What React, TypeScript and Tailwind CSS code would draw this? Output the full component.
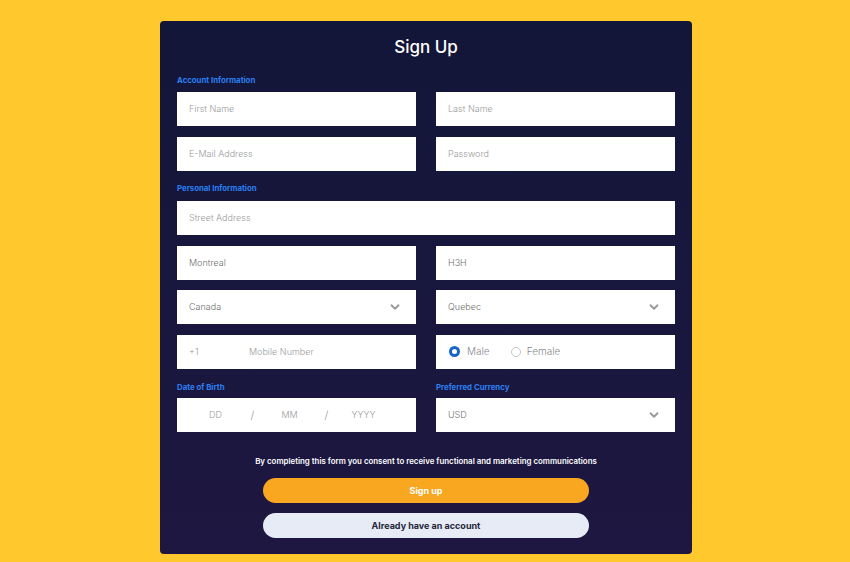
import { ChevronDown } from "lucide-react";

const FONT = { fontFamily: "Inter, 'Noto Sans', sans-serif" };

function Field({ children, className = "" }: { children: React.ReactNode; className?: string }) {
  return (
    <div className={"flex h-[34px] items-center bg-white pl-3 text-[9px] font-light " + className}>
      {children}
    </div>
  );
}

function SelectField({ value }: { value: string }) {
  return (
    <Field className="justify-between pr-[14px] text-[#6f6f6f]">
      <span>{value}</span>
      <ChevronDown className="h-[14px] w-[14px] text-[#9a9a9a]" strokeWidth={3.2} />
    </Field>
  );
}

function Label({ children }: { children: React.ReactNode }) {
  return <div className="text-[7.8px] font-bold leading-[10px] text-[#2a7ff0]">{children}</div>;
}

export default function App() {
  return (
    <div className="flex min-h-screen justify-center bg-[#FFC82C] pl-[2px] pt-[21px]" style={FONT}>
      <div className="h-[533px] w-[532px] rounded-[4px] bg-gradient-to-b from-[#121639] to-[#1e1741] px-[17px] pt-[15px]">
        <h1 className="text-center text-[17px] font-medium leading-[22px] text-white">Sign Up</h1>

        {/* account */}
        <div className="mt-[17px] mb-[7px]">
          <Label>Account Information</Label>
        </div>
        <div className="grid grid-cols-2 gap-x-5 gap-y-[11px] text-[#9a9a9a]">
          <Field>First Name</Field>
          <Field>Last Name</Field>
          <Field>E-Mail Address</Field>
          <Field>Password</Field>
        </div>

        {/* personal */}
        <div className="mt-[12px] mb-[8px]">
          <Label>Personal Information</Label>
        </div>
        <div className="grid grid-cols-2 gap-x-5 gap-y-[10.5px]">
          <Field className="col-span-2 text-[#9a9a9a]">Street Address</Field>
          <Field className="text-[#6f6f6f]">Montreal</Field>
          <Field className="text-[#6f6f6f]">H3H</Field>
          <SelectField value="Canada" />
          <SelectField value="Quebec" />
          <Field className="text-[#9a9a9a]">
            <span className="w-[60px]">+1</span>
            <span>Mobile Number</span>
          </Field>
          <Field className="pl-[13px] text-[10px] text-[#8a8a8a]">
            <span className="h-[11px] w-[11px] rounded-full border-[3.5px] border-[#1764cc] bg-white" />
            <span className="ml-[7px]">Male</span>
            <span className="ml-[21px] h-[10px] w-[10px] rounded-full border border-[#c4c4c4]" />
            <span className="ml-[6px]">Female</span>
          </Field>
        </div>

        {/* birth + currency */}
        <div className="mt-[13.5px] grid grid-cols-2 gap-x-5">
          <div>
            <div className="mb-[6px]">
              <Label>Date of Birth</Label>
            </div>
            <Field className="pl-[20px] text-[#9a9a9a]">
              <span className="w-[37px] text-center">DD</span>
              <span className="w-[37px] text-center text-[11px]">/</span>
              <span className="w-[37px] text-center">MM</span>
              <span className="w-[37px] text-center text-[11px]">/</span>
              <span className="w-[37px] text-center">YYYY</span>
            </Field>
          </div>
          <div>
            <div className="mb-[6px]">
              <Label>Preferred Currency</Label>
            </div>
            <SelectField value="USD" />
          </div>
        </div>

        <p className="mt-[24px] text-center text-[7.9px] font-semibold leading-[10px] text-white">
          By completing this form you consent to receive functional and marketing communications
        </p>

        <div className="mx-auto mt-[12px] flex w-[326px] flex-col gap-[10px]">
          <button className="h-[25px] rounded-full bg-[#f9a620] text-[9px] font-bold text-white">Sign up</button>
          <button className="h-[25px] rounded-full bg-[#e6ebf5] text-[9px] font-bold text-[#25253a]">
            Already have an account
          </button>
        </div>
      </div>
    </div>
  );
}
